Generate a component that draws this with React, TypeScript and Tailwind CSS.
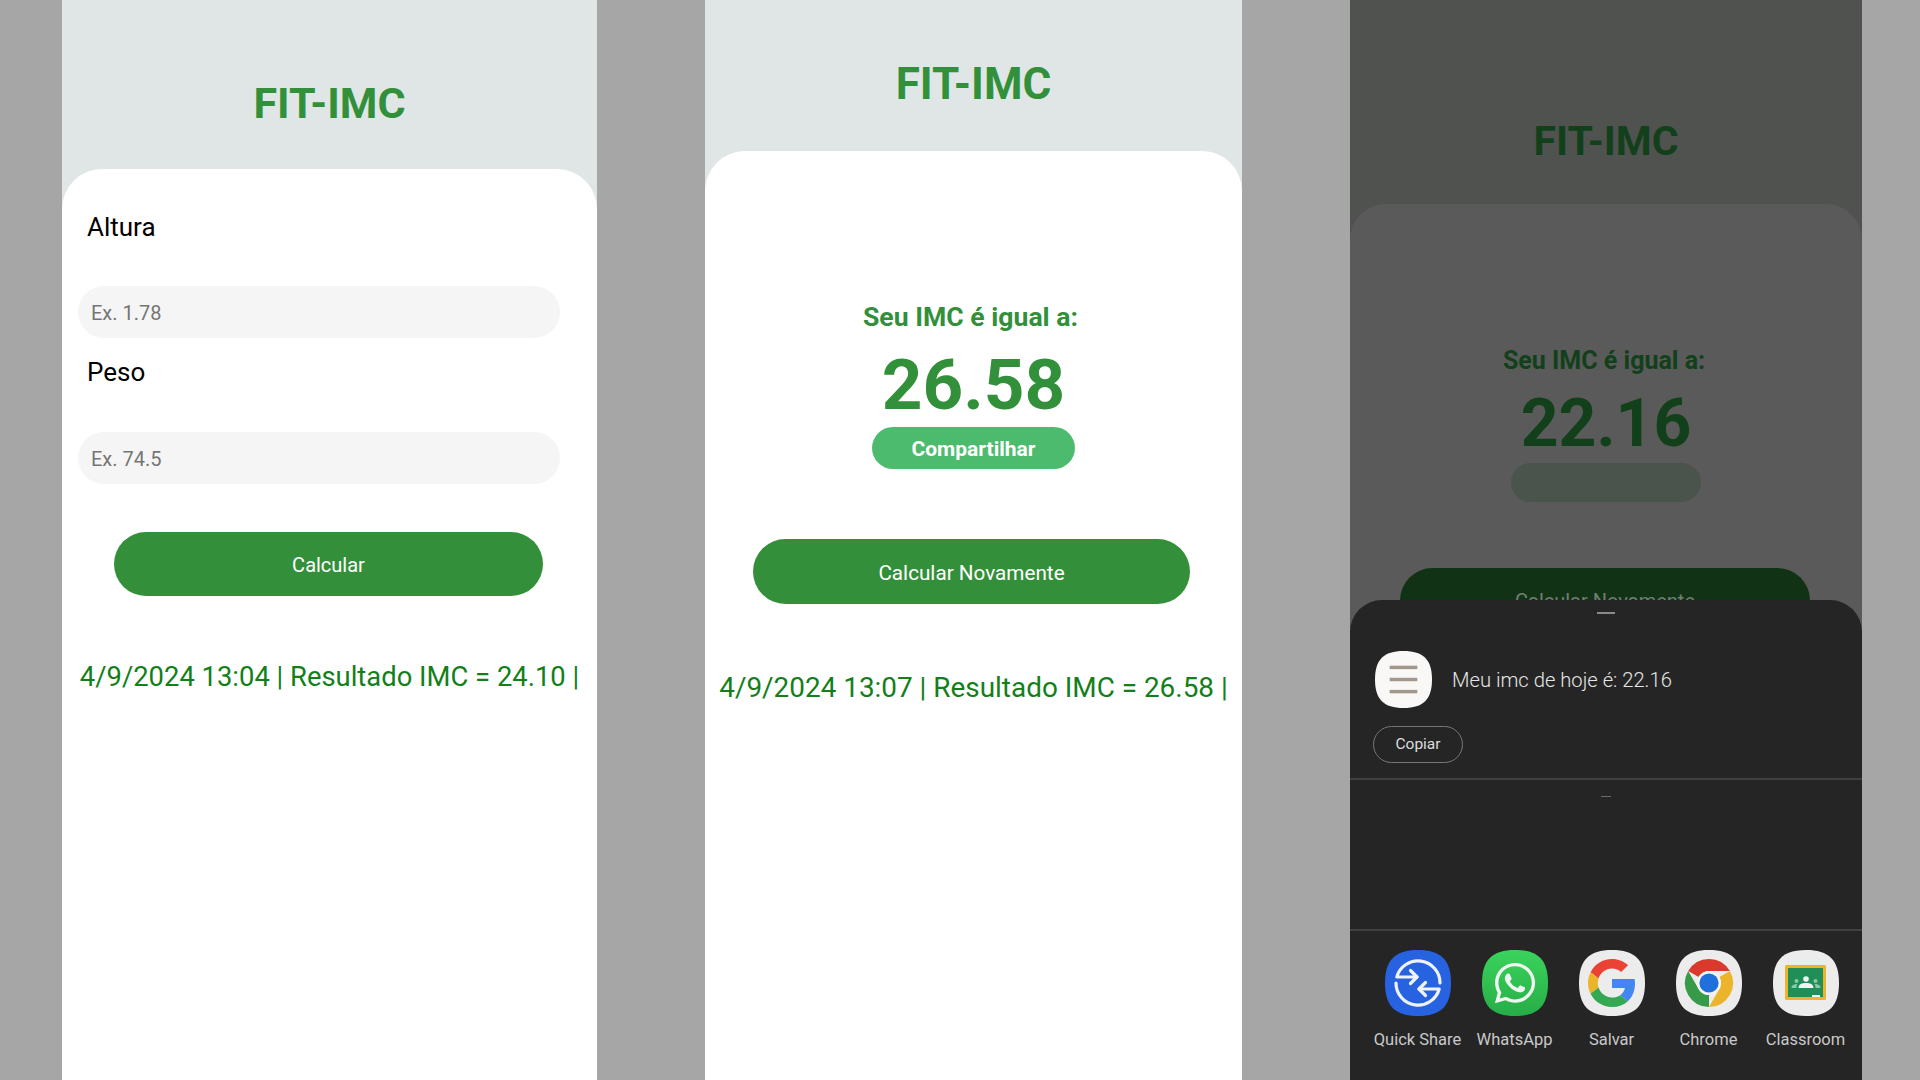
import React from "react";
import { FaWhatsapp } from "react-icons/fa";

const SQUIRCLE = "M33 0C56 0 66 10 66 33C66 56 56 66 33 66C10 66 0 56 0 33C0 10 10 0 33 0Z";

function Squircle({ fill, children, size = 66 }: { fill: string; children?: React.ReactNode; size?: number }) {
  return (
    <svg width={size} height={size} viewBox="0 0 66 66" className="block">
      <path d={SQUIRCLE} fill={fill} />
      {children}
    </svg>
  );
}

function QuickShareIcon() {
  return (
    <Squircle fill="#2763e0">
      <g fill="none" stroke="#eef2fb" strokeWidth="3.2" strokeLinecap="round" strokeLinejoin="round">
        <path d="M55 33A22 22 0 0 0 11.8 27H32" />
        <path d="M25.5 20.5L32 27L25.5 33.5" />
        <path d="M11 33A22 22 0 0 0 54.2 39H34" />
        <path d="M40.5 32.5L34 39L40.5 45.5" />
      </g>
    </Squircle>
  );
}

function WhatsAppIcon() {
  return (
    <div className="relative w-[66px] h-[66px]">
      <svg width="66" height="66" viewBox="0 0 66 66" className="block">
        <defs>
          <linearGradient id="wa" x1="0" y1="0" x2="0" y2="1">
            <stop offset="0" stopColor="#3ad35c" />
            <stop offset="1" stopColor="#27ad47" />
          </linearGradient>
        </defs>
        <path d={SQUIRCLE} fill="url(#wa)" />
      </svg>
      <FaWhatsapp className="absolute left-[10px] top-[10px] text-[46px] text-[#edf7ef]" />
    </div>
  );
}

function GoogleIcon() {
  return (
    <Squircle fill="#ececec">
      <svg x="9" y="9" width="48" height="48" viewBox="0 0 48 48">
        <path fill="#EA4335" d="M24 9.5c3.54 0 6.71 1.22 9.21 3.6l6.85-6.85C35.9 2.38 30.47 0 24 0 14.62 0 6.51 5.38 2.56 13.22l7.98 6.19C12.43 13.72 17.74 9.5 24 9.5z" />
        <path fill="#4285F4" d="M46.98 24.55c0-1.57-.15-3.09-.38-4.55H24v9.02h12.94c-.58 2.96-2.26 5.48-4.78 7.18l7.73 6c4.51-4.18 7.09-10.36 7.09-17.65z" />
        <path fill="#EBB42B" d="M10.53 28.59c-.5-1.45-.78-2.99-.78-4.59s.27-3.14.78-4.59l-7.98-6.19C.92 16.46 0 20.12 0 24c0 3.88.92 7.54 2.56 10.78l7.97-6.19z" />
        <path fill="#34A853" d="M24 48c6.48 0 11.93-2.13 15.89-5.81l-7.73-6c-2.15 1.45-4.92 2.3-8.16 2.3-6.26 0-11.57-4.22-13.47-9.91l-7.98 6.19C6.51 42.62 14.62 48 24 48z" />
      </svg>
    </Squircle>
  );
}

function ChromeIcon() {
  return (
    <Squircle fill="#ececec">
      <path fill="#d93a2b" d="M53.8 21L33 21A12 12 0 0 0 22.6 27L12.2 21A24 24 0 0 1 53.8 21Z" />
      <path fill="#ebb42b" d="M33 57L43.4 39A12 12 0 0 0 43.4 27L53.8 21A24 24 0 0 1 33 57Z" />
      <path fill="#379a48" d="M12.2 21L22.6 39A12 12 0 0 0 33 45L33 57A24 24 0 0 1 12.2 21Z" />
      <circle cx="33" cy="33" r="12" fill="#f4f4f4" />
      <circle cx="33" cy="33" r="9.6" fill="#1f6fdc" />
    </Squircle>
  );
}

function ClassroomIcon() {
  return (
    <Squircle fill="#ececec">
      <rect x="12" y="15" width="41" height="35" rx="1.5" fill="#eeb32c" />
      <rect x="15" y="18" width="35" height="29" fill="#1f8f57" />
      <circle cx="33" cy="29" r="2.8" fill="#f2f2f2" />
      <path d="M25.5 38C25.5 34 29 33 33 33C37 33 40.5 34 40.5 38Z" fill="#f2f2f2" />
      <circle cx="23.5" cy="31" r="2" fill="#8cc7a8" />
      <circle cx="42.5" cy="31" r="2" fill="#8cc7a8" />
      <path d="M18.5 38C18.5 35 21 34 24.5 34C23.5 35.5 23.5 36.5 23.5 38Z" fill="#8cc7a8" />
      <path d="M47.5 38C47.5 35 45 34 41.5 34C42.5 35.5 42.5 36.5 42.5 38Z" fill="#8cc7a8" />
      <rect x="39" y="45" width="8" height="2" fill="#f2f2f2" />
    </Squircle>
  );
}

function NotesIcon() {
  return (
    <svg width="57" height="57" viewBox="0 0 66 66" className="block">
      <path d={SQUIRCLE} fill="#f9f8f6" />
      <rect x="17" y="17" width="32" height="4" fill="#a2978c" />
      <rect x="17" y="31" width="32" height="4" fill="#a2978c" />
      <rect x="17" y="45" width="32" height="4" fill="#a2978c" />
    </svg>
  );
}

function AppItem({ label, children }: { label: string; children?: React.ReactNode }) {
  return (
    <div className="w-[97px] shrink-0 flex flex-col items-center">
      <div className="h-[66px] w-[66px]">{children}</div>
      <span className="mt-[14px] text-[16.5px] leading-[20px] whitespace-nowrap text-[#c9c9c9]">{label}</span>
    </div>
  );
}

export default function App() {
  return (
    <div className="w-[1920px] h-[1080px] overflow-hidden bg-[#a6a6a6] flex gap-[108px] pl-[62px] font-['Roboto',sans-serif]">
      {/* Panel 1 */}
      <section className="w-[535px] h-full flex flex-col bg-[#dfe6e5]">
        <header className="h-[169px] shrink-0 flex justify-center pt-[80px]">
          <h1 className="text-[43px] leading-[46px] font-bold text-[#32903a]">FIT-IMC</h1>
        </header>
        <div className="flex-1 bg-white rounded-t-[40px] flex flex-col">
          <label className="mt-[43px] ml-[25px] text-[26px] leading-[30px] text-black">Altura</label>
          <input
            placeholder="Ex. 1.78"
            className="mt-[44px] ml-[16px] w-[482px] h-[52px] shrink-0 rounded-full bg-[#f5f5f5] px-[13px] pt-[2px] text-[20px] placeholder:text-[#757575] outline-none"
          />
          <label className="mt-[19px] ml-[25px] text-[26px] leading-[30px] text-black">Peso</label>
          <input
            placeholder="Ex. 74.5"
            className="mt-[45px] ml-[16px] w-[482px] h-[52px] shrink-0 rounded-full bg-[#f5f5f5] px-[13px] pt-[2px] text-[20px] placeholder:text-[#757575] outline-none"
          />
          <button className="mt-[48px] ml-[52px] w-[429px] h-[64px] shrink-0 rounded-full bg-[#338f39] pt-[2px] text-white text-[20px]">
            Calcular
          </button>
          <p className="mt-[63px] text-center text-[27.4px] leading-[36px] text-[#137f19] whitespace-nowrap">
            4/9/2024 13:04 | Resultado IMC = 24.10 |
          </p>
        </div>
      </section>

      {/* Panel 2 */}
      <section className="w-[537px] h-full flex flex-col bg-[#dfe6e5]">
        <header className="h-[151px] shrink-0 flex justify-center pt-[61px]">
          <h1 className="text-[44px] leading-[46px] font-bold text-[#32903a]">FIT-IMC</h1>
        </header>
        <div className="flex-1 bg-white rounded-t-[40px] flex flex-col items-center">
          <p className="mt-[151px] text-[26.6px] leading-[30px] font-bold text-[#32903a] -translate-x-[3px]">Seu IMC é igual a:</p>
          <p className="mt-[15px] text-[71px] leading-[76px] font-bold text-[#32903a]">26.58</p>
          <button className="mt-[4px] w-[203px] h-[42px] shrink-0 rounded-full bg-[#4dbb6e] pt-[3px] text-white text-[21px] font-bold">
            Compartilhar
          </button>
          <button className="mt-[70px] w-[437px] h-[65px] shrink-0 rounded-full bg-[#338f39] pt-[4px] text-white text-[20.7px] -translate-x-[2px]">
            Calcular Novamente
          </button>
          <p className="mt-[66px] text-center text-[27.9px] leading-[36px] text-[#137f19] whitespace-nowrap">
            4/9/2024 13:07 | Resultado IMC = 26.58 |
          </p>
        </div>
      </section>

      {/* Panel 3 */}
      <section className="relative w-[512px] h-full flex flex-col bg-[#505250] overflow-hidden">
        <header className="h-[204px] shrink-0 flex justify-center pt-[118px]">
          <h1 className="text-[41px] leading-[46px] font-bold text-[#12401a]">FIT-IMC</h1>
        </header>
        <div className="flex-1 bg-[#5a5a5a] rounded-t-[36px] flex flex-col items-center">
          <p className="mt-[143px] text-[25px] leading-[28px] font-bold text-[#12401a] -translate-x-[2px]">Seu IMC é igual a:</p>
          <p className="mt-[14px] text-[66px] leading-[70px] font-bold text-[#12401a]">22.16</p>
          <div className="mt-[4px] w-[190px] h-[39px] shrink-0 rounded-full bg-[#4a534c]" />
          <button className="mt-[66px] w-[410px] h-[65px] shrink-0 rounded-full bg-[#123216] text-[#6f7f72] text-[20px] -translate-x-[1px]">
            Calcular Novamente
          </button>
        </div>

        {/* Share sheet */}
        <div className="absolute left-0 right-0 top-[600px] bottom-0 bg-[#252525] rounded-t-[32px] flex flex-col overflow-hidden">
          <div className="mt-[12px] self-center w-[18px] h-[2px] bg-[#8a8a8a] shrink-0" />
          <div className="mt-[37px] ml-[25px] flex items-center h-[57px] shrink-0">
            <NotesIcon />
            <span className="ml-[20px] pt-[1px] text-[20.2px] font-light text-[#e6e6e6]">Meu imc de hoje é: 22.16</span>
          </div>
          <div className="mt-[18px] ml-[23px] w-[90px] h-[37px] shrink-0 rounded-full border border-[#777777] pt-[1px] flex items-center justify-center text-[15.5px] text-[#dddddd]">
            Copiar
          </div>
          <div className="mt-[15px] h-[2px] bg-[#404040] shrink-0" />
          <div className="mt-[16px] self-center w-[10px] h-[1px] bg-[#6a6a6a] shrink-0" />
          <div className="mt-[132px] h-[2px] bg-[#404040] shrink-0" />
          <div className="mt-[19px] pl-[19px] flex shrink-0">
            <AppItem label="Quick Share"><QuickShareIcon /></AppItem>
            <AppItem label="WhatsApp"><WhatsAppIcon /></AppItem>
            <AppItem label="Salvar"><GoogleIcon /></AppItem>
            <AppItem label="Chrome"><ChromeIcon /></AppItem>
            <AppItem label="Classroom"><ClassroomIcon /></AppItem>
            <AppItem label="Aplicativos" />
          </div>
        </div>
      </section>
    </div>
  );
}
